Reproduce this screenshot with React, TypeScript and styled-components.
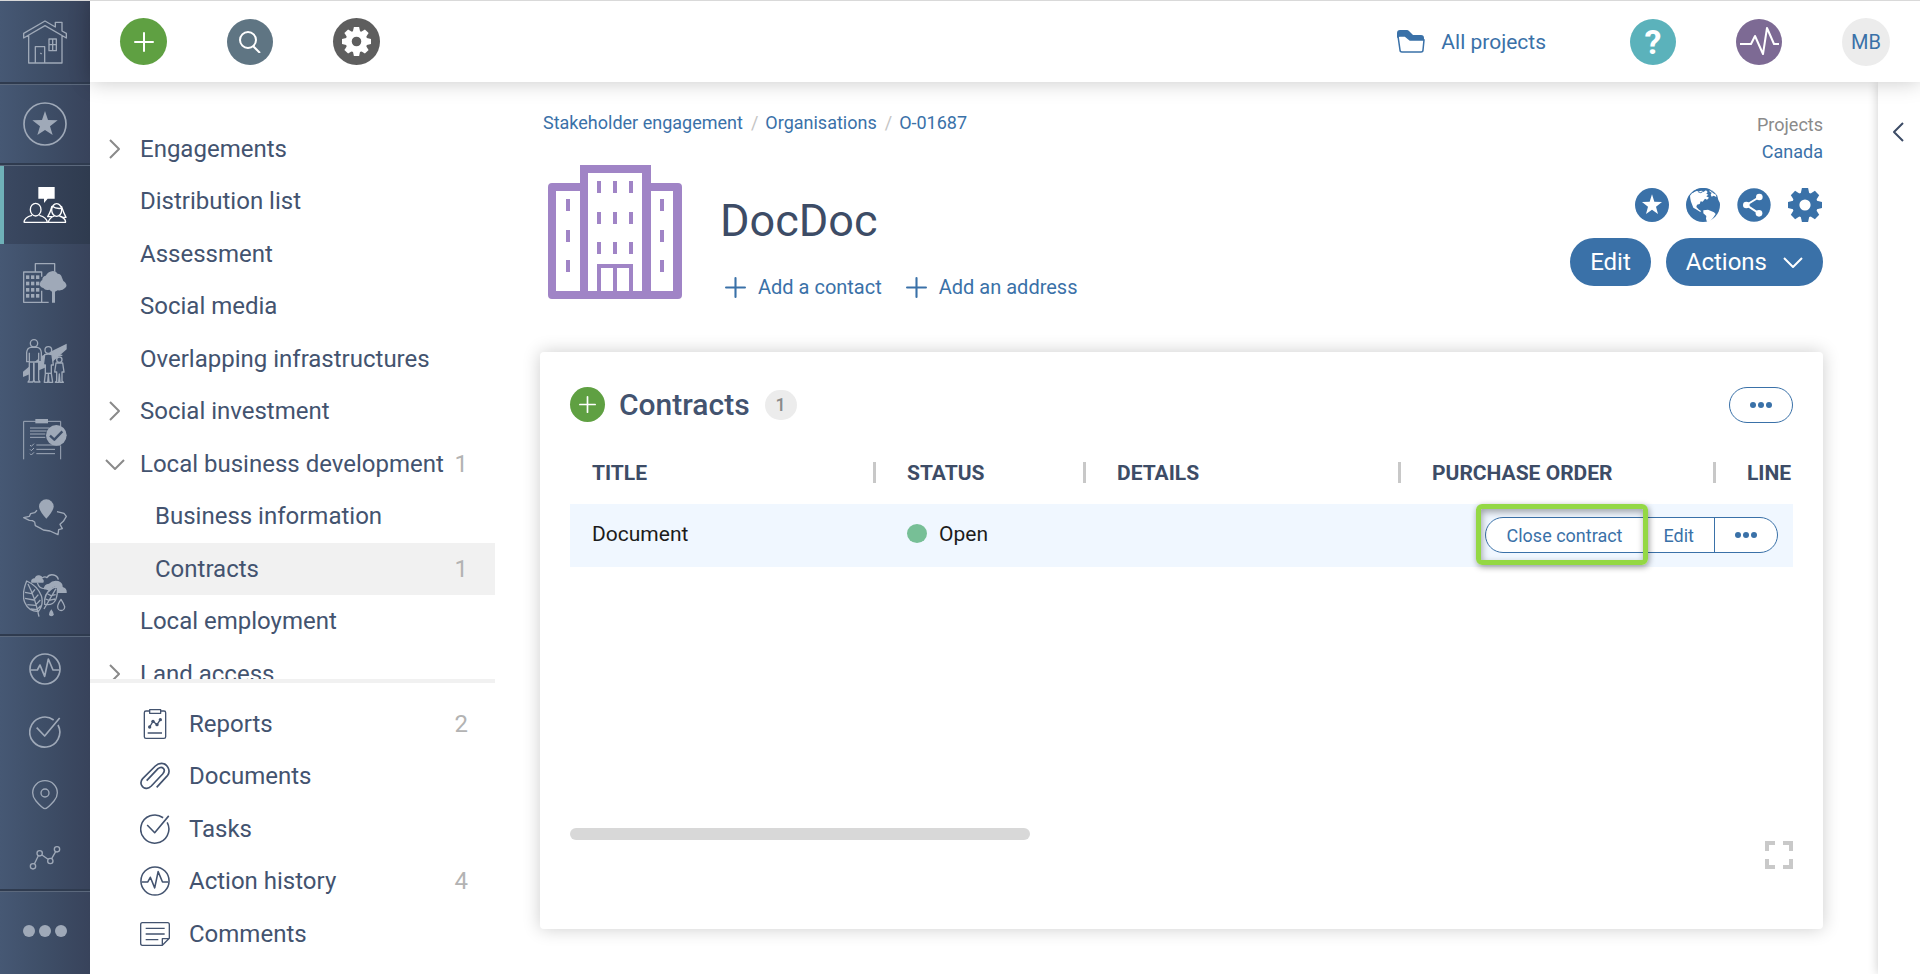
import React from "react";
import styled, { createGlobalStyle, css } from "styled-components";

const color = {
  navy: "#43536f",
  navyDark: "#3d4c66",
  blue: "#3a71a8",
  green: "#5fa042",
  muted: "#b3b3b3",
  railIcon: "#9fa9b8",
  railBg: "#3f4f69",
};

const GlobalStyle = createGlobalStyle`
  *, *::before, *::after { box-sizing: border-box; }
  body {
    margin: 0;
    background: #fff;
    color: ${color.navy};
    font-family: Roboto, "Liberation Sans", sans-serif;
    font-size: 18px;
  }
  button { font: inherit; padding: 0; border: 0; background: none; color: inherit; cursor: pointer; }
  a { color: ${color.blue}; text-decoration: none; }
  svg { display: block; flex: none; }
  h1, h2, ul, ol, p { margin: 0; padding: 0; font-weight: 400; list-style: none; }
`;

/* ---------- Icons ---------- */

type IconProps = { size?: number };

const Stroke = styled.svg<{ $w?: number }>`
  fill: none;
  stroke: currentColor;
  stroke-width: ${(p) => p.$w ?? 4}px;
  stroke-linejoin: round;
  .solid { fill: currentColor; stroke: none; }
  .masked { fill: ${color.railBg}; }
  .cut { stroke: ${color.railBg}; stroke-width: 7px; }
  .paper { fill: #fff; }
`;

const HomeIcon = () => (
  <Stroke width="44" height="44" viewBox="69 59 132 132" $w={4}>
    <path d="M71 99 135 62l31 18V66h20v26l13 7v14l-64-37-64 37zM86 106v82h100v-82M106 188v-49h28v49M147 116h22v35h-22zM158 116v35M147 133h22M121 158l4 3" />
  </Stroke>
);

const StarRingIcon = () => (
  <Stroke width="44" height="44" viewBox="69 306 132 132" $w={5}>
    <circle cx="135" cy="372" r="63" />
    <path className="solid" d="m135 333 9 27 29 1-23 18 8 26-23-15-23 15 8-26-23-18 29-1z" />
  </Stroke>
);

const PeopleIcon = () => (
  <Stroke width="44" height="44" viewBox="69 549 132 132" $w={4}>
    <path className="solid" d="M115 561h49v35h-21l-11 13v-13h-17z" />
    <ellipse cx="107" cy="629" rx="16" ry="19" />
    <path d="M72 667q1-15 24-21M118 646q22 6 24 21M71 667h127" />
    <ellipse cx="170" cy="630" rx="15" ry="19" />
    <path d="M156 618q-6 22-13 32h14M184 618q7 21 14 34h-13M157 619q10 8 27 6M145 667q2-13 18-19M178 648q18 5 19 19" />
  </Stroke>
);

const CityTreeIcon = () => (
  <Stroke width="44" height="44" viewBox="69 783 132 132" $w={4}>
    <path d="M146 907H71v-91h54v14M125 872v35M106 814v-23h58v24" />
    {[826, 845, 864, 882].map((y) =>
      [78, 93, 108].map((x) => <rect key={`${x}-${y}`} className="solid" x={x} y={y} width="10" height="11" />),
    )}
    <path className="solid" d="M159 813q10 1 14 8 10 0 13 12 3 11 9 14 9 11 0 17-7 9-22 7-4 3-8 4v33h-9v-33l-8-6q-12 4-18-5-14-5-10-15 2-8 7-9-1-10 10-13 8-13 22-14z" />
  </Stroke>
);

const FamilyIcon = () => (
  <Stroke width="44" height="44" viewBox="69 57 132 132" $w={4}>
    <path className="solid" d="M69 155 125 108 200 71v17l-60 53-71 30z" />
    <circle className="masked" cx="102" cy="70" r="11" />
    <path className="masked" d="M80 125V98q1-14 12-16h20q11 2 12 16v27h-8v55l4 6h-16l-2-6v-50h-1v50l-2 6H84l4-6v-55zM88 98v28h28V98" />
    <circle className="masked" cx="145" cy="90" r="10" />
    <path className="masked" d="M134 104q11-4 22 0l4 31h-6v26l4 26h-11l-2-24-2 24h-10l3-26v-26h-6z" />
    <path d="M136 160h18" />
    <circle className="masked" cx="178" cy="119" r="8" />
    <path className="masked" d="M168 129h20l4 27h-6v27l4 4h-10l-2-25-2 25h-10l4-4v-27h-6z" />
    <path d="M169 106h18" />
  </Stroke>
);

const ChecklistIcon = () => (
  <Stroke width="44" height="44" viewBox="69 290 132 132" $w={3}>
    <path d="M71 417V303h111v14M182 376v41" />
    <path className="solid" d="M106 296h38v13h-38z" />
    <path d="M90 323h58M90 332h50M90 341h46M90 351h46M109 374h73M109 387h56M109 400h56M90 374l4 4 8-8M90 387l4 4 8-8M90 400l4 4 8-8" />
    <circle className="solid" cx="169" cy="345" r="31" />
    <path className="cut" d="m150 346 13 12 24-25" />
  </Stroke>
);

const TerritoryIcon = () => (
  <Stroke width="44" height="44" viewBox="69 524 132 132" $w={4}>
    <path className="solid" d="M139 595q-22-24-22-37a22 21 0 0 1 44 0q0 13-22 37z" />
    <path d="m111 570-7 7-12 3-4 8-17 4 17 8 9 1 7 4 2 11 16 8 8 5 20 3 24 11 2-15 11-3-7-13 10-9 9-15-7-9-21-5" />
  </Stroke>
);

const NatureIcon = () => (
  <Stroke width="44" height="44" viewBox="69 757 132 132" $w={4}>
    <path d="M80 781q-16 39-6 64 11 27 41 28 17-23 9-48-12-30-44-44zM84 790q21 40 33 98M75 815l20 4 10-13M75 833l26 5 14-16M82 852l24 2 15-16M92 865l19 2 11-12" />
    <path d="M172 796q-34 12-38 40v15q24 5 33-14 7-16 5-41zM168 804l-36 61M143 820l10 5 14-3M137 835l10 4 18-4" />
    <path className="solid" d="M94 786q-3-12 10-13 4-11 14-9 10 2 9 10 7 4 3 12zM131 805q1-15 16-16 11-12 28-8 14 5 13 18 14 4 12 18h-27v-20q-18 0-25 16-3-6-17-8z" />
    <path d="M126 772q9-6 15-1 6-11 20-8 12 3 14 14M112 786q5 19 24 18M183 836q-10 14-10 22a10 11 0 0 0 21 0q-2-8-11-22z" />
    <path className="solid" d="M154 866q-7 9-7 15a7 6 0 0 0 14 0q0-6-7-15z" />
  </Stroke>
);

const PulseIcon = ({ size = 32 }: IconProps) => (
  <Stroke width={size} height={size} viewBox="87 67 96 96" $w={5}>
    <circle cx="135" cy="115" r="45" />
    <path d="M93 118h19l8-15 14 34 11-52 14 33h18" />
  </Stroke>
);

const TaskIcon = ({ size = 32 }: IconProps) => (
  <Stroke width={size} height={size} viewBox="87 256 96 96" $w={5}>
    <path d="M161 268a45 45 0 1 0 13 15M110 291l24 25 45-54" />
  </Stroke>
);

const PinIcon = () => (
  <Stroke width="32" height="32" viewBox="87 446 96 96" $w={4}>
    <path d="M135 535q-7 0-27-23-10-12-10-25a37 36 0 0 1 74 0q0 13-10 25-20 23-27 23z" />
    <circle cx="135" cy="488" r="12" />
  </Stroke>
);

const GraphIcon = () => (
  <Stroke width="32" height="32" viewBox="87 635 96 96" $w={4}>
    <path d="m103 701 12-25M126 674l18 13M155 685l12-21" />
    <circle cx="99" cy="708" r="8" />
    <circle cx="119" cy="669" r="8" />
    <circle cx="151" cy="692" r="8" />
    <circle cx="171" cy="657" r="8" />
  </Stroke>
);

const ReportIcon = () => (
  <Stroke width="30" height="30" viewBox="420 237 90 90" $w={4}>
    <rect x="433" y="243" width="64" height="82" rx="5" />
    <rect className="paper" x="449" y="239" width="33" height="11" />
    <path d="m449 291 10-17 12 10 10-15M443 309h43" />
    {[[449, 291], [459, 274], [471, 284], [481, 269]].map(([x, y]) => (
      <circle key={x} className="solid" cx={x} cy={y} r="5" />
    ))}
  </Stroke>
);

const ClipIcon = () => (
  <Stroke width="30" height="30" viewBox="420 393 90 90" $w={5}>
    <path d="m470 472 33-36c11-16-3-36-18-36-7 0-13 2-19 8l-38 38c-12 14 0 30 12 29 6 0 10-3 14-7l34-36c12-14-2-26-14-16l-34 36" />
  </Stroke>
);

const NoteIcon = () => (
  <Stroke width="30" height="30" viewBox="420 867 90 90" $w={4}>
    <path d="M427 878h76q5 0 5 6v41l-21 21h-60q-5 0-5-6v-56q0-6 5-6zM487 946v-20h21M437 895h57M437 912h57M437 929h38" />
  </Stroke>
);

const GearIcon = ({ size = 34 }: IconProps) => (
  <svg width={size} height={size} viewBox="0 0 100 100">
    <circle cx="50" cy="50" r="27" fill="none" stroke="currentColor" strokeWidth="21" />
    {[0, 45, 90, 135, 180, 225, 270, 315].map((a) => (
      <path key={a} d="M41 0h18l4 18H37z" fill="currentColor" transform={`rotate(${a} 50 50)`} />
    ))}
  </svg>
);

const PlusIcon = ({ size = 20 }: IconProps) => (
  <Stroke width={size} height={size} viewBox="0 0 20 20" $w={2} strokeLinecap="round">
    <path d="M10 1v18M1 10h18" />
  </Stroke>
);

const SearchIcon = () => (
  <Stroke width="22" height="22" viewBox="0 0 22 22" $w={2}>
    <circle cx="9" cy="9" r="8" />
    <path d="m14 15 7 7" />
  </Stroke>
);

const FolderIcon = () => (
  <svg width="28" height="23" viewBox="0 0 28 23">
    <path d="M0 8V3Q0 0 3 0h7q1 0 2 1l4 4h8q3 0 3 3v2H14q-1 0-2-1L8 6H3z" fill="currentColor" />
    <path d="M1 6h7l5 4h14l-1 10q0 2-2 2H5q-2 0-2-2z" fill="none" stroke="currentColor" strokeWidth="1.5" />
  </svg>
);

const HeaderPulse = () => (
  <Stroke width="39" height="30" viewBox="0 0 39 30" $w={2}>
    <path d="M0 17h11l4-8 8 18 4-26 7 16h5" />
  </Stroke>
);

const Chevron = ({ dir, size = 20 }: { dir: "right" | "down" | "left"; size?: number }) => {
  const paths = { right: "m5 1 9 9-9 9", down: "m1 6 9 9 9-9", left: "m14 1-9 9 9 9" };
  return (
    <Stroke width={size} height={size} viewBox="0 0 20 20" $w={2}>
      <path d={paths[dir]} />
    </Stroke>
  );
};

const StarBadgeIcon = () => (
  <svg width="34" height="34" viewBox="30 24 102 102">
    <circle cx="81" cy="75" r="51" fill="currentColor" />
    <path fill="#fff" d="m81 43 7 22 23 1-18 14 6 22-18-13-18 13 6-22-18-14 23-1z" />
  </svg>
);

const GlobeIcon = () => (
  <svg width="34" height="34" viewBox="182 24 102 102">
    <circle cx="233" cy="75" r="51" fill="currentColor" />
    <path fill="#fff" d="M200 40q8-6 14-7l4 1 12-2 4 4 8-5 5 5-4 5 6 3-6 5 8 4-6 6-6-3-7 9-6-1-3 8-8 2-2 7 8 8 6 4-2 3-13-8-8-5-7-18-2-9-1-9zM234 91l14-2 18 8 5 5-8 12-9 10-9 2-3-10 1-8-9-8zM252 30l8 2 4 8 8 4 1 7-8-4-6 3-3-6 3-6-6-3zM276 48l8 6v14l-5-8z" />
    <path d="M201 38q14-13 32-13t30 12M218 35l8 3 6-3" fill="none" stroke="currentColor" strokeWidth="3" />
  </svg>
);

const ShareIcon = () => (
  <svg width="34" height="34" viewBox="336 24 102 102">
    <circle cx="387" cy="75" r="50" fill="currentColor" />
    <path d="m403 51-39 24 38 25" fill="none" stroke="#fff" strokeWidth="6" />
    <circle cx="403" cy="51" r="10" fill="#fff" />
    <circle cx="364" cy="75" r="10" fill="#fff" />
    <circle cx="402" cy="100" r="10" fill="#fff" />
  </svg>
);

const OrganisationIcon = () => (
  <svg width="134" height="134" viewBox="0 0 134 134" fill="#a084c6" role="img" aria-label="Organisation">
    <path fillRule="evenodd" d="M4 18h28V0h71v18h27q4 0 4 4v108q0 4-4 4H4q-4 0-4-4V22q0-4 4-4zM8 26v100h24V26zM40 8v118h54V8zM103 26v100h22V26z" />
    {[16, 47, 77].map((y) => [49, 65, 81].map((x) => <rect key={`${x}-${y}`} x={x} y={y} width="4" height="12" />))}
    {[34, 65, 95].map((y) => [18, 112].map((x) => <rect key={`${x}-${y}`} x={x} y={y} width="4" height="12" />))}
    <path d="M49 126V99h36v27h-4v-23H69v23h-4v-23H53v23z" />
  </svg>
);

const DotsIcon = () => (
  <svg width="22" height="6" viewBox="0 0 22 6" fill="currentColor">
    <circle cx="3" cy="3" r="3" />
    <circle cx="11" cy="3" r="3" />
    <circle cx="19" cy="3" r="3" />
  </svg>
);

const ExpandIcon = () => (
  <svg width="28" height="28" viewBox="0 0 28 28" fill="none" stroke="currentColor" strokeWidth="4">
    <path d="M2 10V2h8M18 2h8v8M26 18v8h-8M10 26H2v-8" />
  </svg>
);

/* ---------- Page frame ---------- */

const Page = styled.div`
  display: grid;
  grid-template-columns: 90px minmax(0, 1fr);
  height: 100vh;
  border-top: 1px solid #d9d9d9;
  overflow: hidden;
`;

const Rail = styled.nav`
  display: flex;
  flex-direction: column;
  background: linear-gradient(90deg, #465874, #3e4e67 50%, #38435b);
  color: ${color.railIcon};
`;

const RailGroup = styled.div<{ $grow?: boolean }>`
  display: flex;
  flex-direction: column;
  ${(p) =>
    p.$grow
      ? "flex: 1;"
      : css`
          border-bottom: 2px solid #2f3b4f;
          box-shadow: 0 1px 0 #5b687c;
          margin-bottom: 1px;
        `}
`;

const RailButton = styled.button<{ $h: number; $active?: boolean }>`
  height: ${(p) => p.$h}px;
  display: flex;
  align-items: center;
  justify-content: center;
  ${(p) =>
    p.$active &&
    css`
      background: linear-gradient(90deg, #3b4962, #2f3b4f);
      box-shadow: inset 4px 0 0 #6fb1b8;
      color: #fff;
    `}
`;

const Body = styled.div`
  display: flex;
  flex-direction: column;
  min-width: 0;
  min-height: 0;
`;

const TopBar = styled.header`
  position: relative;
  z-index: 2;
  flex: none;
  height: 81px;
  padding: 0 30px;
  display: flex;
  align-items: center;
  justify-content: space-between;
  background: #fff;
  box-shadow: 0 0 20px rgba(0, 0, 0, 0.22);
`;

const BarGroup = styled.div`
  display: flex;
  align-items: center;
  gap: 60px;
`;

const RoundButton = styled.button<{ $bg: string; $size?: number }>`
  width: ${(p) => p.$size ?? 46}px;
  height: ${(p) => p.$size ?? 46}px;
  border-radius: 50%;
  display: flex;
  align-items: center;
  justify-content: center;
  background: ${(p) => p.$bg};
  color: #fff;
`;

const HelpMark = styled.span`
  font-size: 34px;
  line-height: 46px;
  font-weight: 700;
`;

const Initials = styled.span`
  font-size: 20px;
  color: ${color.blue};
`;

const ProjectLink = styled.a`
  display: flex;
  align-items: center;
  gap: 16px;
  margin-right: 24px;
  font-size: 21px;
`;

const Columns = styled.div`
  flex: 1;
  min-height: 0;
  display: grid;
  grid-template-columns: 405px minmax(0, 1fr) 42px;
`;

/* ---------- Side menu ---------- */

const Side = styled.aside`
  display: flex;
  flex-direction: column;
  min-height: 0;
`;

const rowRhythm = css`
  & > li:nth-child(even) { margin-bottom: 1px; }
`;

const Tree = styled.ul`
  flex: 1;
  min-height: 0;
  overflow: hidden;
  padding-top: 41px;
  ${rowRhythm}
`;

const Tools = styled.ul`
  padding: 15px 0 14px;
  border-top: 4px solid #f1f1f1;
  ${rowRhythm}
`;

const Row = styled.li<{ $active?: boolean }>`
  display: flex;
  align-items: center;
  height: 52px;
  padding-right: 27px;
  background: ${(p) => (p.$active ? "#f1f1f1" : "transparent")};
  font-size: 24px;
  line-height: 52px;
  white-space: nowrap;
`;

const Toggle = styled.span`
  width: 50px;
  display: flex;
  padding-left: 15px;
  color: #8a8a8a;
`;

const RowLink = styled.a<{ $nested?: boolean }>`
  flex: 1;
  padding-left: ${(p) => (p.$nested ? 15 : 0)}px;
  color: ${color.navy};
`;

const ToolLink = styled.a`
  flex: 1;
  display: flex;
  align-items: center;
  gap: 19px;
  padding-left: 50px;
  color: ${color.navy};
`;

const Count = styled.span`
  color: ${color.muted};
`;

/* ---------- Record ---------- */

const Main = styled.main`
  padding: 28px 55px 45px 45px;
  min-width: 0;
`;

const RecordHead = styled.div`
  display: flex;
  justify-content: space-between;
  margin-bottom: 53px;
`;

const Crumbs = styled.ol`
  display: flex;
  padding-left: 3px;
  font-size: 18px;
  line-height: 26px;
  li + li::before { content: "/"; margin: 0 7px 0 8px; color: #c4c4c4; }
`;

const Identity = styled.div`
  display: flex;
  gap: 38px;
  padding: 29px 0 0 8px;
`;

const Name = styled.h1`
  margin-top: 30px;
  font-size: 45px;
  line-height: 52px;
  color: ${color.navyDark};
`;

const AddLinks = styled.div`
  display: flex;
  gap: 24px;
  margin-top: 28px;
  padding-left: 5px;
`;

const AddButton = styled.button`
  display: flex;
  align-items: center;
  gap: 12px;
  font-size: 20px;
  line-height: 24px;
  color: ${color.blue};
`;

const RecordSide = styled.div`
  display: flex;
  flex-direction: column;
  align-items: flex-end;
  padding-top: 1px;
  font-size: 18px;
  line-height: 27px;
`;

const Muted = styled.span`
  color: #8a8a8a;
`;

const IconRow = styled.div`
  display: flex;
  gap: 17px;
  margin: 23px 1px 16px 0;
  color: ${color.blue};
`;

const ButtonRow = styled.div`
  display: flex;
  gap: 15px;
`;

const PillButton = styled.button`
  display: flex;
  align-items: center;
  gap: 16px;
  height: 48px;
  padding: 0 20px;
  border-radius: 24px;
  background: ${color.blue};
  color: #fff;
  font-size: 24px;
`;

/* ---------- Contracts card ---------- */

const Card = styled.section`
  padding: 35px 30px 60px;
  border-radius: 4px;
  background: #fff;
  box-shadow: 0 0 18px rgba(0, 0, 0, 0.2);
`;

const CardHead = styled.div`
  display: flex;
  align-items: center;
  height: 35px;
  margin-bottom: 20px;
`;

const CardTitle = styled.h2`
  margin: 0 15px 0 14px;
  font-size: 30px;
  line-height: 34px;
  font-weight: 500;
  color: ${color.navy};
`;

const Badge = styled.span`
  width: 32px;
  height: 30px;
  border-radius: 15px;
  background: #ececec;
  color: #8a8a8a;
  font-weight: 500;
  line-height: 30px;
  text-align: center;
`;

const MoreButton = styled.button`
  width: 64px;
  height: 36px;
  margin-left: auto;
  display: flex;
  align-items: center;
  justify-content: center;
  border: 1px solid ${color.blue};
  border-radius: 18px;
  color: ${color.blue};
`;

const TableArea = styled.div`
  position: relative;
  min-height: 386px;
  overflow: hidden;
`;

const Table = styled.table`
  width: 1470px;
  table-layout: fixed;
  border-collapse: collapse;
  font-size: 21px;
`;

const HeadCell = styled.th<{ $w: number }>`
  position: relative;
  width: ${(p) => p.$w}px;
  height: 62px;
  padding: 0 0 0 22px;
  text-align: left;
  font-weight: 700;
  color: ${color.navyDark};
  white-space: nowrap;
  &:not(:first-child)::before {
    content: "";
    position: absolute;
    left: -12px;
    top: 20px;
    width: 3px;
    height: 21px;
    background: #c8c8c8;
  }
`;

const Cell = styled.td`
  height: 63px;
  padding: 0 0 4px 22px;
  background: #f0f7ff;
  color: #1c1c1c;
`;

const Status = styled.span`
  display: flex;
  align-items: center;
  gap: 12px;
  &::before {
    content: "";
    width: 20px;
    height: 19px;
    border-radius: 50%;
    background: #77bf96;
  }
`;

const RowActions = styled.div`
  position: absolute;
  top: 75px;
  right: 15px;
  display: flex;
  height: 36px;
  border: 1px solid ${color.blue};
  border-radius: 18px;
  background: #fff;
  color: ${color.blue};
  & > * + * { border-left: 1px solid ${color.blue}; }
`;

const RowAction = styled.button`
  display: flex;
  align-items: center;
  padding: 0 20px;
`;

const Marked = styled.div`
  position: relative;
  display: flex;
  &::after {
    content: "";
    position: absolute;
    inset: -14px -5px -13px -10px;
    z-index: 1;
    border: 5px solid #94d844;
    border-radius: 6px;
    box-shadow: 1px 2px 6px rgba(0, 0, 0, 0.4), inset 1px 3px 7px rgba(0, 0, 0, 0.35);
    pointer-events: none;
  }
`;

const ScrollTrack = styled.div`
  height: 12px;
`;

const ScrollThumb = styled.div`
  height: 12px;
  border-radius: 6px;
  background: #d8d8d8;
`;

const CardFoot = styled.div`
  display: flex;
  justify-content: flex-end;
  padding-top: 1px;
  color: #c9c9c9;
`;

const Drawer = styled.aside`
  display: flex;
  align-items: flex-start;
  justify-content: center;
  padding-top: 40px;
  box-shadow: 0 0 10px rgba(0, 0, 0, 0.2);
  color: ${color.navyDark};
`;

/* ---------- Data ---------- */

type TreeItem = { label: string; state?: "right" | "down"; nested?: boolean; active?: boolean; count?: number };

const tree: TreeItem[] = [
  { label: "Engagements", state: "right" },
  { label: "Distribution list" },
  { label: "Assessment" },
  { label: "Social media" },
  { label: "Overlapping infrastructures" },
  { label: "Social investment", state: "right" },
  { label: "Local business development", state: "down", count: 1 },
  { label: "Business information", nested: true },
  { label: "Contracts", nested: true, active: true, count: 1 },
  { label: "Local employment" },
  { label: "Land access", state: "right" },
];

const tools = [
  { label: "Reports", icon: <ReportIcon />, count: 2 },
  { label: "Documents", icon: <ClipIcon /> },
  { label: "Tasks", icon: <TaskIcon size={30} /> },
  { label: "Action history", icon: <PulseIcon size={30} />, count: 4 },
  { label: "Comments", icon: <NoteIcon /> },
];

const modules = [
  { label: "Stakeholder engagement", icon: <PeopleIcon />, active: true },
  { label: "Infrastructure", icon: <CityTreeIcon /> },
  { label: "Resettlement", icon: <FamilyIcon /> },
  { label: "Compliance", icon: <ChecklistIcon /> },
  { label: "Territory", icon: <TerritoryIcon /> },
  { label: "Environment", icon: <NatureIcon /> },
];

const shortcuts = [
  { label: "Action history", icon: <PulseIcon /> },
  { label: "Tasks", icon: <TaskIcon /> },
  { label: "Map", icon: <PinIcon /> },
  { label: "Indicators", icon: <GraphIcon /> },
];

const columns: [string, number][] = [
  ["TITLE", 315],
  ["STATUS", 210],
  ["DETAILS", 315],
  ["PURCHASE ORDER", 315],
  ["LINE", 315],
];

const scroll = { visible: 1223, total: 3250 };

export default function App() {
  return (
    <>
      <GlobalStyle />
      <Page>
        <Rail aria-label="Modules">
          <RailGroup>
            <RailButton $h={81} aria-label="Home"><HomeIcon /></RailButton>
          </RailGroup>
          <RailGroup>
            <RailButton $h={78} aria-label="Favourites"><StarRingIcon /></RailButton>
          </RailGroup>
          <RailGroup>
            {modules.map((m) => (
              <RailButton key={m.label} $h={78} $active={m.active} aria-label={m.label}>{m.icon}</RailButton>
            ))}
          </RailGroup>
          <RailGroup>
            {shortcuts.map((s) => (
              <RailButton key={s.label} $h={63} aria-label={s.label}>{s.icon}</RailButton>
            ))}
          </RailGroup>
          <RailGroup $grow>
            <RailButton $h={78} aria-label="More">
              <svg width="44" height="12" viewBox="0 0 44 12" fill="currentColor">
                <circle cx="6" cy="6" r="6" />
                <circle cx="22" cy="6" r="6" />
                <circle cx="38" cy="6" r="6" />
              </svg>
            </RailButton>
          </RailGroup>
        </Rail>

        <Body>
          <TopBar>
            <BarGroup>
              <RoundButton $bg={color.green} $size={47} aria-label="Add"><PlusIcon /></RoundButton>
              <RoundButton $bg="#5f7583" aria-label="Search"><SearchIcon /></RoundButton>
              <RoundButton $bg="#5e5e5e" $size={47} aria-label="Settings"><GearIcon size={29} /></RoundButton>
            </BarGroup>
            <BarGroup>
              <ProjectLink href="#projects"><FolderIcon />All projects</ProjectLink>
              <RoundButton $bg="#5bb2bb" aria-label="Help"><HelpMark>?</HelpMark></RoundButton>
              <RoundButton $bg="#7d6a94" aria-label="Activity"><HeaderPulse /></RoundButton>
              <RoundButton $bg="#ececec" $size={48}><Initials>MB</Initials></RoundButton>
            </BarGroup>
          </TopBar>

          <Columns>
            <Side>
              <Tree>
                {tree.map((t) => (
                  <Row key={t.label} $active={t.active}>
                    <Toggle>{t.state && <Chevron dir={t.state} />}</Toggle>
                    <RowLink href="#section" $nested={t.nested}>{t.label}</RowLink>
                    {t.count && <Count>{t.count}</Count>}
                  </Row>
                ))}
              </Tree>
              <Tools>
                {tools.map((t) => (
                  <Row key={t.label}>
                    <ToolLink href="#tool">{t.icon}{t.label}</ToolLink>
                    {t.count && <Count>{t.count}</Count>}
                  </Row>
                ))}
              </Tools>
            </Side>

            <Main>
              <RecordHead>
                <div>
                  <Crumbs>
                    <li><a href="#stakeholders">Stakeholder engagement</a></li>
                    <li><a href="#organisations">Organisations</a></li>
                    <li><a href="#record">O-01687</a></li>
                  </Crumbs>
                  <Identity>
                    <OrganisationIcon />
                    <div>
                      <Name>DocDoc</Name>
                      <AddLinks>
                        <AddButton><PlusIcon size={21} />Add a contact</AddButton>
                        <AddButton><PlusIcon size={21} />Add an address</AddButton>
                      </AddLinks>
                    </div>
                  </Identity>
                </div>
                <RecordSide>
                  <Muted>Projects</Muted>
                  <a href="#canada">Canada</a>
                  <IconRow>
                    <button aria-label="Favourite"><StarBadgeIcon /></button>
                    <button aria-label="Geography"><GlobeIcon /></button>
                    <button aria-label="Share"><ShareIcon /></button>
                    <button aria-label="Record settings"><GearIcon /></button>
                  </IconRow>
                  <ButtonRow>
                    <PillButton>Edit</PillButton>
                    <PillButton>Actions<Chevron dir="down" /></PillButton>
                  </ButtonRow>
                </RecordSide>
              </RecordHead>

              <Card>
                <CardHead>
                  <RoundButton $bg={color.green} $size={35} aria-label="Add contract"><PlusIcon size={17} /></RoundButton>
                  <CardTitle>Contracts</CardTitle>
                  <Badge>1</Badge>
                  <MoreButton aria-label="More options"><DotsIcon /></MoreButton>
                </CardHead>
                <TableArea>
                  <Table>
                    <thead>
                      <tr>{columns.map(([label, w]) => <HeadCell key={label} $w={w}>{label}</HeadCell>)}</tr>
                    </thead>
                    <tbody>
                      <tr>
                        <Cell>Document</Cell>
                        <Cell><Status>Open</Status></Cell>
                        <Cell />
                        <Cell />
                        <Cell />
                      </tr>
                    </tbody>
                  </Table>
                  <RowActions>
                    <Marked><RowAction>Close contract</RowAction></Marked>
                    <RowAction>Edit</RowAction>
                    <RowAction aria-label="More actions"><DotsIcon /></RowAction>
                  </RowActions>
                </TableArea>
                <ScrollTrack>
                  <ScrollThumb style={{ width: `${(scroll.visible / scroll.total) * 100}%` }} />
                </ScrollTrack>
                <CardFoot>
                  <button aria-label="Full screen"><ExpandIcon /></button>
                </CardFoot>
              </Card>
            </Main>

            <Drawer>
              <button aria-label="Open panel"><Chevron dir="left" /></button>
            </Drawer>
          </Columns>
        </Body>
      </Page>
    </>
  );
}
